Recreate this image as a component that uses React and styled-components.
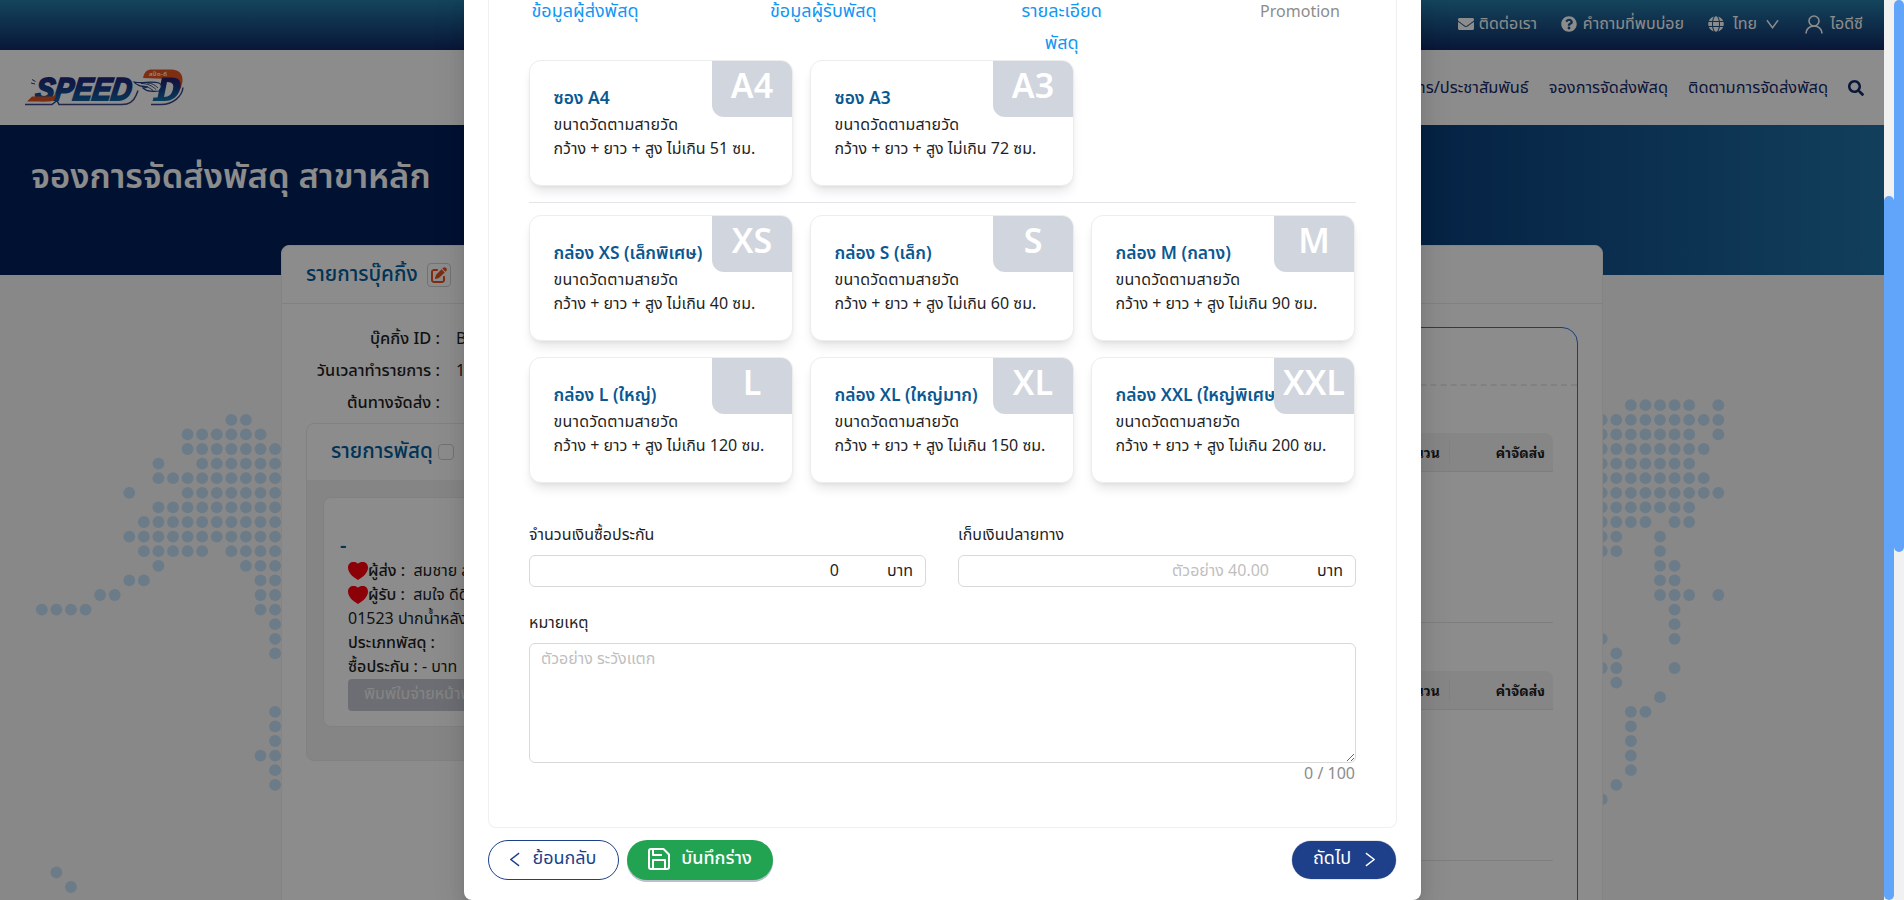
import React from 'react';
import styled, { createGlobalStyle } from 'styled-components';
import { FaEnvelope, FaQuestionCircle, FaGlobe, FaSearch } from 'react-icons/fa';
import { FaPenToSquare } from 'react-icons/fa6';

const thai = '"Noto Sans Thai", "Noto Sans", sans-serif';

const GlobalStyle = createGlobalStyle`
  *, *::before, *::after { box-sizing: border-box; }
  body { margin: 0; overflow: hidden; font-family: ${thai}; font-size: 16px; color: #1f1f1f; }
  input, textarea, button { font-family: inherit; }
`;

const Screen = styled.div`
  display: flex;
  width: 1904px;
  height: 900px;
  overflow: hidden;
`;
const Viewport = styled.div`
  position: relative;
  width: 1884px;
  height: 900px;
  overflow: hidden;
  background: #f7f7f7;
`;
const ScrollTrack = styled.div`
  display: flex;
  flex-direction: column;
  justify-content: ${p => (p.$end ? 'flex-end' : 'flex-start')};
  width: 10px;
  background: #f1f1f1;
`;
const ScrollThumb = styled.div`
  height: ${p => p.$size}px;
  border-radius: 5px;
  background: #60a5fa;
`;

/* site header */
const TopBar = styled.div`
  display: flex;
  justify-content: flex-end;
  align-items: center;
  height: 50px;
  padding: 0 21px 2px 0;
  color: #fff;
  background: linear-gradient(180deg, #257da9 0%, #112a66 100%);
  svg { flex: none; }
`;
const TopItem = styled.div`
  display: flex;
  align-items: center;
  justify-content: space-between;
  width: ${p => p.$w}px;
  margin-right: ${p => p.$mr || 0}px;
  font-size: 16px;
  line-height: 24px;
  white-space: nowrap;
`;
const NavBar = styled.div`
  display: flex;
  align-items: center;
  justify-content: space-between;
  height: 75px;
  padding: 0 20px 0 24px;
  background: #fff;
`;
const NavLinks = styled.div`
  display: flex;
  align-items: center;
  gap: 20px;
  color: #152a68;
  font-size: 16.4px;
  line-height: 24px;
  white-space: nowrap;
`;
const Hero = styled.div`
  height: 150px;
  padding: 26px 31px;
  background: linear-gradient(90deg, #00205c 0%, #00205c 50%, #0b407c 76%, #165993 88%, #2173a7 100%);
`;
const HeroTitle = styled.h1`
  margin: 0;
  color: #fff;
  font-size: 34.5px;
  font-weight: 600;
  line-height: 54px;
  white-space: nowrap;
`;
const MapDots = styled.svg`
  position: absolute;
  left: 0;
  top: 275px;
`;

/* booking card behind the dialog */
const BookingCard = styled.div`
  position: relative;
  width: 1322px;
  height: 700px;
  margin: -30px 0 0 281px;
  border: 1px solid #f0f0f0;
  border-radius: 8px 8px 0 0;
  background: #fff;
`;
const BookingHead = styled.div`
  display: flex;
  align-items: center;
  height: 58px;
  padding: 0 24px;
  gap: 9px;
  border-bottom: 1px solid #ececec;
`;
const CardTitle = styled.div`
  color: #005e9c;
  font-size: 20.600px;
  font-weight: 500;
  line-height: 30px;
  white-space: nowrap;
`;
const EditButton = styled.div`
  display: flex;
  align-items: center;
  justify-content: center;
  width: 24px;
  height: 24px;
  border: 1px solid #d0d0d0;
  border-radius: 4px;
  color: #e8501f;
`;
const BookingBody = styled.div`
  display: flex;
  justify-content: space-between;
  padding: 20px 24px 0;
`;
const LeftColumn = styled.div`width: 400px;`;
const InfoRow = styled.div`
  display: grid;
  grid-template-columns: 134px 1fr;
  column-gap: 16px;
  height: 32px;
  line-height: 30px;
`;
const InfoLabel = styled.div`
  display: flex;
  justify-content: flex-end;
  font-size: 16.4px;
  font-weight: 500;
  white-space: nowrap;
`;
const ParcelBox = styled.div`
  height: 338px;
  margin-top: 3px;
  overflow: hidden;
  border: 1px solid #ebebeb;
  border-radius: 8px;
  background: #f2f2f2;
`;
const ParcelHead = styled.div`
  display: flex;
  align-items: center;
  gap: 5px;
  height: 56px;
  padding-left: 24px;
  background: #fff;
`;
const SmallBox = styled.div`
  width: 16px;
  height: 16px;
  border: 1px solid #d0d0d0;
  border-radius: 4px;
`;
const ParcelCard = styled.div`
  height: 230px;
  margin: 17px 16px;
  padding: 35px 24px 0;
  border: 1px solid #ececec;
  border-radius: 8px;
  background: #fff;
`;
const ParcelCode = styled.div`
  margin-left: -8px;
  color: #005e9c;
  font-size: 20px;
  font-weight: 600;
  line-height: 26px;
`;
const ParcelLine = styled.div`
  display: flex;
  align-items: center;
  height: 24px;
  white-space: pre;
  b { font-weight: 500; }
`;
const PrintButton = styled.div`
  width: 200px;
  height: 32px;
  padding-left: 16px;
  border-radius: 4px;
  background: #c6c9d2;
  color: #f1f1f1;
  line-height: 31px;
  white-space: nowrap;
`;
const SummaryPanel = styled.div`
  width: 560px;
  height: 640px;
  margin-top: 3px;
  border: 1px solid #2f74de;
  border-radius: 16px;
`;
const SummaryHead = styled.div`
  height: 58px;
  border-bottom: 2px dashed #ececec;
`;
const SummaryTable = styled.div`
  height: 190px;
  margin: ${p => p.$mt}px 24px 0;
  border-bottom: 1px solid #e6e6e6;
`;
const TableHead = styled.div`
  display: flex;
  align-items: center;
  justify-content: flex-end;
  height: 39px;
  padding-right: 8px;
  border-bottom: 1px solid #e6e6e6;
  border-radius: 8px 8px 0 0;
  background: #f5f5f5;
  font-family: "Noto Sans Thai Looped", "Liberation Sans", sans-serif;
  font-size: 14px;
  font-weight: 700;
  line-height: 22px;
  div + div { width: 96px; margin-left: 9px; text-align: right; border-left: 1px solid #ebebeb; }
`;

/* dialog */
const Mask = styled.div`
  position: absolute;
  inset: 0;
  display: flex;
  justify-content: center;
  background: rgba(0, 0, 0, 0.45);
`;
const Dialog = styled.div`
  display: flex;
  flex-direction: column;
  width: 957px;
  height: 900px;
  margin-left: 1px;
  padding: 0 24px;
  border-radius: 0 0 8px 8px;
  background: #fff;
  box-shadow: 0 6px 16px rgba(0, 0, 0, 0.08), 0 3px 6px -4px rgba(0, 0, 0, 0.12), 0 9px 28px 8px rgba(0, 0, 0, 0.07);
`;
const Panel = styled.div`
  height: 828px;
  padding: 0 40px;
  border: 1px solid #f0f0f0;
  border-top: 0;
  border-radius: 0 0 8px 8px;
`;
const Steps = styled.div`
  display: grid;
  grid-template-columns: repeat(4, 112px);
  justify-content: space-between;
  height: 60px;
`;
const Step = styled.div`
  margin-top: -4px;
  color: ${p => (p.$idle ? '#8c8c8c' : '#1296f3')};
  font-size: ${p => (p.$idle ? 16 : 18)}px;
  line-height: 32px;
  text-align: center;
  white-space: nowrap;
`;
const SizeGrid = styled.div`
  display: grid;
  grid-template-columns: repeat(3, 264px);
  gap: 16px 17px;
`;
const SizeCard = styled.div`
  position: relative;
  height: 126px;
  padding: 25px 0 0 23.500px;
  border: 1px solid #ededee;
  border-radius: 12px;
  background: #fff;
  box-shadow: 0 8px 12px -3px rgba(0, 0, 0, 0.11), 0 2px 5px -2px rgba(0, 0, 0, 0.08);
`;
const SizeName = styled.div`
  color: #0b5891;
  font-size: 17.400px;
  font-weight: 600;
  line-height: 27px;
  white-space: nowrap;
`;
const SizeNote = styled.div`
  font-size: 16px;
  line-height: 24px;
  letter-spacing: ${p => p.$track || 0}px;
  white-space: nowrap;
`;
const SizeBadge = styled.div`
  position: absolute;
  top: 0;
  right: 0;
  width: 80px;
  height: 56px;
  border-radius: 0 11px 0 12px;
  background: #d1d5dd;
  color: #fff;
  font-size: 34px;
  font-weight: 600;
  line-height: 53px;
  text-align: center;
`;
const Divider = styled.div`
  height: 1px;
  margin: 16px 0 12px;
  background: #e4e5e8;
`;
const FieldRow = styled.div`
  display: grid;
  grid-template-columns: 397px 398px;
  justify-content: space-between;
  margin-top: 38px;
`;
const Field = styled.label`display: block;`;
const FieldLabel = styled.div`
  height: 34px;
  line-height: 29px;
`;
const MoneyBox = styled.div`
  display: flex;
  align-items: center;
  height: 32px;
  padding: 0 12px 0 11px;
  border: 1px solid #d9d9d9;
  border-radius: 6px;
`;
const MoneyInput = styled.input`
  flex: 1;
  min-width: 0;
  height: 28px;
  padding: 0;
  border: 0;
  outline: 0;
  background: none;
  color: #1f1f1f;
  font-size: 16px;
  text-align: right;
  &::placeholder { color: #bfbfbf; opacity: 1; }
`;
const Unit = styled.span`
  width: 74px;
  text-align: right;
`;
const RemarkField = styled.label`
  display: block;
  margin-top: 22px;
`;
const Remark = styled.textarea`
  display: block;
  width: 100%;
  height: 120px;
  padding: 3px 11px;
  border: 1px solid #d9d9d9;
  border-radius: 6px;
  outline: 0;
  font-size: 16px;
  line-height: 25px;
  resize: vertical;
  &::placeholder { color: #bfbfbf; opacity: 1; }
`;
const Counter = styled.div`
  padding-right: 1px;
  color: #8c8c8c;
  line-height: 23px;
  text-align: right;
`;
const Footer = styled.div`
  display: flex;
  align-items: center;
  height: 64px;
  padding-right: 1px;
  gap: 8px;
`;
const PillButton = styled.button`
  display: flex;
  align-items: center;
  justify-content: center;
  gap: ${p => p.$gap}px;
  width: ${p => p.$w}px;
  height: ${p => p.$h || 40}px;
  margin-left: ${p => (p.$last ? 'auto' : 0)};
  padding: 0 0 2px;
  border: ${p => (p.$outline ? '1px solid #1e3f8a' : '0')};
  border-radius: 20px;
  background: ${p => p.$bg};
  color: ${p => (p.$outline ? '#1e3f8a' : '#fff')};
  box-shadow: ${p => p.$shadow || 'none'};
  font-size: 18px;
  font-weight: ${p => p.$weight || 400};
  line-height: 28px;
  white-space: nowrap;
`;

const Chevron = ({ d, w, h, box, sw = 1.5 }) => (
  <svg width={w} height={h} viewBox={box} fill="none" stroke="currentColor" strokeWidth={sw}><path d={d} /></svg>
);
const UserIcon = () => (
  <svg width="18" height="19" viewBox="0 0 18 19" fill="none" stroke="currentColor" strokeWidth="1.6">
    <circle cx="9" cy="6" r="5" /><path d="M1 18.5c0-4.500 3.500-7.500 8-7.500s8 3 8 7.500" />
  </svg>
);
const SaveIcon = () => (
  <svg width="22" height="22" viewBox="0 0 22 22" fill="none" stroke="currentColor" strokeWidth="2" strokeLinejoin="round">
    <path d="M3 1h12.500L21 6.500V19a2 2 0 0 1-2 2H3a2 2 0 0 1-2-2V3a2 2 0 0 1 2-2z" />
    <path d="M5 1v6h9M5 21v-9h12v9" />
  </svg>
);
const Heart = () => (
  <svg width="20" height="18" viewBox="0 0 20 18"><path fill="#ff0010" d="M10 18C5 15 0 11 0 5.500C0 2 2.500 0 5.300 0C7.500 0 9 .6 10 1.800C11 .6 12.500 0 14.700 0C17.500 0 20 2 20 5.500C20 11 15 15 10 18z" /></svg>
);
const LogoSvg = styled.svg`
  display: block;
  flex: none;
`;
const Logo = () => (
  <LogoSvg width="161" height="38" viewBox="0 0 161 38">
    <defs>
      <linearGradient id="ink" x1="0" y1="0" x2="0" y2="1"><stop offset="0" stopColor="#2a1c6e" /><stop offset=".45" stopColor="#173b86" /><stop offset="1" stopColor="#0f74ae" /></linearGradient>
    </defs>
    <path d="M1 35.500h27l5-4 2 4h13l4 0h46c8 0 12-4 14-9l2-5M127 35.500h10c12 0 21-8 22-17" fill="none" stroke="#3e4585" strokeWidth="1.500" />
    <path d="M8 10.500l3.500 2M7 14l4 1" fill="none" stroke="#2a3a80" />
    <g transform="translate(7 0) skewX(-8)">
      <text x="8" y="31.500" fontFamily="Liberation Sans" fontStyle="italic" fontWeight="700" fontSize="31.500" textLength="96" lengthAdjust="spacingAndGlyphs" fill="url(#ink)" stroke="url(#ink)" strokeWidth="2">SPEED</text>
    </g>
    <path d="M8 27.500h20c2 0 3-1 3-3l1 0c0 5-2 8-7 8H3z" fill="#e0521f" />
    <path d="M119 9c1-6 4-8.500 9-8.500h19c9 0 12 5 11.500 12l-2 8c-1-7-5-10.500-11-10.500z" fill="#ea5522" />
    <path fillRule="evenodd" d="M138 8.500h10c7 0 9.500 4 8.500 10c-2 9-8 13.500-16 13.500h-12l1-3.500h4zM143 13l-3 15c5 0 8-3 9-8c1-4 0-7-6-7z" fill="url(#ink)" />
    <path d="M110 13c9 2 17-1.500 25 1c3 1 3 5 0 8c-7 1-13 0-16-3c2 0 3 0 4-1c-5 0-11-2-13-5z" fill="#fff" stroke="#1d3b80" strokeWidth="1.100" />
    <path d="M117 14.500c6 0 11 2 15 6M123 14c5 0 8 2 11 5M118 17c5 0 8 2 11 4.500" fill="none" stroke="#1d3b80" strokeWidth=".9" />
    <text x="125" y="6.800" fontFamily="Noto Sans Thai" fontSize="6" fontWeight="600" fill="#fff" textLength="18">สปีด-ดี</text>
  </LogoSvg>
);

const leftDots = [[13, 14], [10, 11, 12, 13, 14, 15], [10, 11, 12, 13, 14, 15, 16], [8, 11, 12, 13, 14, 15, 16], [8, 9, 10, 11, 12, 13, 14, 15, 16], [6, 10, 11, 12, 13, 14, 15, 16], [8, 9, 10, 11, 12, 13, 14, 15, 16], [7, 8, 9, 10, 11, 12, 13, 14, 15, 16], [6, 7, 8, 9, 10, 11, 12, 13, 14, 15, 16], [7, 8, 9, 10, 11, 13, 14, 15, 16], [8, 14, 15, 16], [6, 7, 15, 16], [4, 5, 15, 16], [0, 1, 2, 3, 15, 16], [16], [16], [16], [], [], [], [16], [16], [16], [15, 16], [16], [16], [], [], [], [], [], [1], [2]];
const rightDots = [[2, 3, 4, 5, 6, 8], [0, 1, 2, 3, 4, 5, 6, 7, 8], [0, 1, 2, 3, 4, 5, 6, 8], [0, 1, 2, 3, 4, 5, 6, 7], [0, 1, 2, 3, 4, 5, 6], [0, 1, 2, 3, 4, 5, 6, 7], [0, 1, 2, 3, 4, 5, 6, 7, 8], [0, 1, 2, 3, 4, 5, 6], [0, 1, 2, 3, 5, 6], [0, 1, 4], [0, 1, 4], [4, 5], [4, 5], [4, 5, 6, 8], [5], [5], [0, 5], [1], [0, 1, 5], [1], [4], [2, 3], [2], [2], [2], [2], [1], [0]];
const dots = (rows, x0, y0) => rows.flatMap((cols, r) => cols.map(c => <circle key={`${x0}-${r}-${c}`} cx={x0 + c * 14.58} cy={y0 + r * 14.6} r="5.9" />));

const envelopes = [['A4', 'ซอง A4', 51], ['A3', 'ซอง A3', 72]];
const boxes = [['XS', 'กล่อง XS (เล็กพิเศษ)', 40], ['S', 'กล่อง S (เล็ก)', 60], ['M', 'กล่อง M (กลาง)', 90], ['L', 'กล่อง L (ใหญ่)', 120], ['XL', 'กล่อง XL (ใหญ่มาก)', 150], ['XXL', 'กล่อง XXL (ใหญ่พิเศษ)', 200]];
const Sizes = ({ items }) => (
  <SizeGrid>
    {items.map(([code, name, max]) => (
      <SizeCard key={code}>
        <SizeName>{name}</SizeName>
        <SizeNote $track={0.2}>ขนาดวัดตามสายวัด</SizeNote>
        <SizeNote>กว้าง + ยาว + สูง ไม่เกิน {max} ซม.</SizeNote>
        <SizeBadge>{code}</SizeBadge>
      </SizeCard>
    ))}
  </SizeGrid>
);
const Summary = ({ mt }) => (
  <SummaryTable $mt={mt}>
    <TableHead><div>จำนวน</div><div>ค่าจัดส่ง</div></TableHead>
  </SummaryTable>
);

export default function App() {
  return (
    <Screen>
      <GlobalStyle />
      <Viewport>
        <TopBar>
          <TopItem $w={79} $mr={24}><FaEnvelope size={16} />ติดต่อเรา</TopItem>
          <TopItem $w={123} $mr={24}><FaQuestionCircle size={16} />คำถามที่พบบ่อย</TopItem>
          <TopItem $w={71} $mr={26}><FaGlobe size={16} />ไทย<Chevron d="M1 1l6 8 6-8" w={13} h={10} box="0 0 14 10" /></TopItem>
          <TopItem $w={58}><UserIcon />ไอดีซี</TopItem>
        </TopBar>
        <NavBar>
          <Logo />
          <NavLinks>
            <span>ข่าวสาร/ประชาสัมพันธ์</span>
            <span>จองการจัดส่งพัสดุ</span>
            <span>ติดตามการจัดส่งพัสดุ</span>
            <FaSearch size={16} />
          </NavLinks>
        </NavBar>
        <Hero><HeroTitle>จองการจัดส่งพัสดุ สาขาหลัก</HeroTitle></Hero>
        <MapDots width="1884" height="625" viewBox="0 275 1884 625" fill="#c3e0f7">
          {dots(leftDots, 41.8, 419.8)}
          {dots(rightDots, 1601.7, 405.2)}
        </MapDots>
        <BookingCard>
          <BookingHead>
            <CardTitle>รายการบุ๊คกิ้ง</CardTitle>
            <EditButton><FaPenToSquare size={16} /></EditButton>
          </BookingHead>
          <BookingBody>
            <LeftColumn>
              <InfoRow><InfoLabel>บุ๊คกิ้ง ID :</InfoLabel><div>B</div></InfoRow>
              <InfoRow><InfoLabel>วันเวลาทำรายการ :</InfoLabel><div>1</div></InfoRow>
              <InfoRow><InfoLabel>ต้นทางจัดส่ง :</InfoLabel></InfoRow>
              <ParcelBox>
                <ParcelHead><CardTitle>รายการพัสดุ</CardTitle><SmallBox /></ParcelHead>
                <ParcelCard>
                  <ParcelCode>-</ParcelCode>
                  <ParcelLine><Heart /><b>ผู้ส่ง :</b>  สมชาย ส</ParcelLine>
                  <ParcelLine><Heart /><b>ผู้รับ :</b>  สมใจ ดีดี</ParcelLine>
                  <ParcelLine>01523 ปากน้ำหลัง</ParcelLine>
                  <ParcelLine><b>ประเภทพัสดุ :</b></ParcelLine>
                  <ParcelLine><b>ซื้อประกัน :</b> - บาท</ParcelLine>
                  <PrintButton>พิมพ์ใบจ่ายหน้าพัสดุ</PrintButton>
                </ParcelCard>
              </ParcelBox>
            </LeftColumn>
            <SummaryPanel>
              <SummaryHead />
              <Summary mt={47} />
              <Summary mt={48} />
            </SummaryPanel>
          </BookingBody>
        </BookingCard>
        <Mask>
          <Dialog>
            <Panel>
              <Steps>
                <Step>ข้อมูลผู้ส่งพัสดุ</Step>
                <Step>ข้อมูลผู้รับพัสดุ</Step>
                <Step>รายละเอียด<br />พัสดุ</Step>
                <Step $idle>Promotion</Step>
              </Steps>
              <Sizes items={envelopes} />
              <Divider />
              <Sizes items={boxes} />
              <FieldRow>
                <Field>
                  <FieldLabel>จำนวนเงินซื้อประกัน</FieldLabel>
                  <MoneyBox><MoneyInput defaultValue="0" /><Unit>บาท</Unit></MoneyBox>
                </Field>
                <Field>
                  <FieldLabel>เก็บเงินปลายทาง</FieldLabel>
                  <MoneyBox><MoneyInput placeholder="ตัวอย่าง 40.00" /><Unit>บาท</Unit></MoneyBox>
                </Field>
              </FieldRow>
              <RemarkField>
                <FieldLabel>หมายเหตุ</FieldLabel>
                <Remark placeholder="ตัวอย่าง ระวังแตก" />
              </RemarkField>
              <Counter>0 / 100</Counter>
            </Panel>
            <Footer>
              <PillButton $w={131} $gap={12} $outline $bg="#fff"><Chevron d="M10 1L1 8l9 7" w={10} h={15} box="0 0 11 16" />ย้อนกลับ</PillButton>
              <PillButton $w={146} $gap={11} $bg="#22a352" $weight={500} $shadow="0 2px 0 #b9c0cc"><SaveIcon />บันทึกร่าง</PillButton>
              <PillButton $w={104} $h={38} $gap={14} $last $bg="#1e3f8a" $shadow="0 0 0 0.5px #c9cdd6"><span>ถัดไป</span><Chevron d="M1 1l9 7-9 7" w={10} h={15} box="0 0 11 16" /></PillButton>
            </Footer>
          </Dialog>
        </Mask>
      </Viewport>
      <ScrollTrack $end><ScrollThumb $size={704} /></ScrollTrack>
      <ScrollTrack><ScrollThumb $size={552} /></ScrollTrack>
    </Screen>
  );
}
